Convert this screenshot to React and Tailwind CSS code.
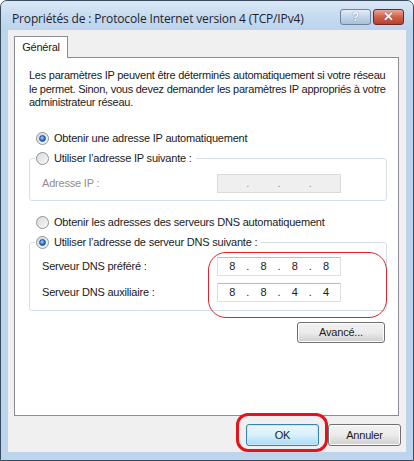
import React from 'react';

const body = { fontFamily: '"Liberation Sans", Arial, sans-serif' };
const title = { fontFamily: '"Open Sans", "Liberation Sans", sans-serif' };

function Radio({ checked }) {
  return (
    <span className="w-[13px] h-[13px] rounded-full border border-[#8f9496] bg-gradient-to-br from-[#d6d8da] to-[#fbfbfb] flex items-center justify-center shrink-0">
      {checked && (
        <span className="w-[7px] h-[7px] rounded-full bg-[radial-gradient(circle_at_40%_35%,#9fd2f7,#1f62b8_70%)] border border-[#1b4f93]" />
      )}
    </span>
  );
}

function IpField({ values, disabled }) {
  const parts = values || ['', '', '', ''];
  return (
    <div
      className={`w-[124px] h-[19px] border flex items-center text-[11px] ${
        disabled ? 'bg-[#efefef] border-[#dadada] text-[#8f8f8f]' : 'bg-white border-[#dcdfe6] border-t-[#b8bcc5] text-[#1a1a1a]'
      }`}
    >
      {parts.map((v, i) => (
        <React.Fragment key={i}>
          <span className="flex-1 text-center">{v}</span>
          {i < 3 && <span className="w-[3px] text-center leading-none">.</span>}
        </React.Fragment>
      ))}
    </div>
  );
}

function Button({ children, primary }) {
  return (
    <button
      className={`h-[22px] w-[73px] rounded-[3px] border text-[11px] text-[#1a1a1a] ${
        primary
          ? 'border-[#3c7fb1] bg-gradient-to-b from-[#eaf6fd] via-[#d9f0fc] to-[#a7d9f5] shadow-[inset_0_0_0_1px_#c8eaf8]'
          : 'border-[#707070] bg-gradient-to-b from-[#f2f2f2] via-[#ebebeb] to-[#cfcfcf] shadow-[inset_0_0_0_1px_#fcfcfc]'
      }`}
    >
      {children}
    </button>
  );
}

export default function App() {
  return (
    <div className="w-[414px] h-[461px] bg-white">
      <div className="w-[414px] h-[461px] border border-[#394a5c] rounded-t-[7px] bg-[#bcd4ec] flex flex-col overflow-hidden">
        {/* title bar */}
        <div className="h-[29px] shrink-0 flex items-center pl-[11px] pr-[9px] bg-gradient-to-b from-[#dae8f6] via-[#c7dcf1] to-[#bcd3ec]">
          <span className="text-[12px] tracking-[-0.15px] text-[#1e1e2e] mt-[6px] flex-1" style={title}>
            Propriétés de : Protocole Internet version 4 (TCP/IPv4)
          </span>
          <div className="flex gap-[2px] mt-[8px] self-start">
            <div className="w-[31px] h-[16px] rounded-[3px] border border-[#6d8299] bg-gradient-to-b from-[#e3edf7] via-[#c3d5e8] to-[#a9c2dc] flex items-center justify-center text-[12px] font-bold text-white [text-shadow:0_0_1px_#3b4b5c]" style={body}>
              ?
            </div>
            <div className="w-[31px] h-[16px] rounded-[3px] border border-[#6e2a22] bg-gradient-to-b from-[#e9a595] via-[#d0604b] to-[#b8402c] flex items-center justify-center text-[13px] font-bold text-white [text-shadow:0_0_1px_#4a1208]" style={body}>
              ✕
            </div>
          </div>
        </div>

        {/* client area */}
        <div className="mx-[7px] h-[422px] bg-[#f0f0f0] flex flex-col px-[6px] pt-[6px] text-[11px] tracking-[-0.2px]" style={body}>
          <div className="flex">
            <div className="h-[22px] w-[54px] bg-white border border-[#898c95] border-b-0 flex items-center justify-center text-[#1a1a1a] relative z-10">
              Général
            </div>
          </div>
          <div className="relative h-[359px] -mt-[1px] mr-[1px] bg-white border border-[#898c95] pl-[14px] pr-[11px] pt-[11px] text-[#1a1a1a]">
            <p className="leading-[13.5px] w-[362px] tracking-[-0.25px]">
              Les paramètres IP peuvent être déterminés automatiquement si votre réseau le permet. Sinon, vous devez demander les paramètres IP appropriés à votre administrateur réseau.
            </p>

            <div className="mt-[22px] ml-[7px] h-[14px] flex items-center gap-[5px]">
              <Radio checked />
              <span>Obtenir une adresse IP automatiquement</span>
            </div>

            <fieldset className="mt-[6px] border border-[#d5dfe5] rounded-[3px] pl-[12px] pr-[45px] pb-[7px]">
              <legend className="-ml-[7px] pl-[1px] pr-[4px] h-[14px] flex items-center gap-[5px]">
                <Radio />
                <span>Utiliser l’adresse IP suivante :</span>
              </legend>
              <div className="mt-[8px] flex items-center">
                <span className="flex-1 text-[#8f8f8f]">Adresse IP :</span>
                <IpField disabled />
              </div>
            </fieldset>

            <div className="mt-[15px] ml-[7px] h-[14px] flex items-center gap-[5px]">
              <Radio />
              <span>Obtenir les adresses des serveurs DNS automatiquement</span>
            </div>

            <div className="relative">
              <fieldset className="mt-[6px] border border-[#d5dfe5] rounded-[3px] pl-[12px] pr-[45px] pb-[8px]">
                <legend className="-ml-[7px] pl-[1px] pr-[4px] h-[14px] flex items-center gap-[5px]">
                  <Radio checked />
                  <span>Utiliser l’adresse de serveur DNS suivante :</span>
                </legend>
                <div className="mt-[7px] flex items-center">
                  <span className="flex-1">Serveur DNS préféré :</span>
                  <IpField values={['8', '8', '8', '8']} />
                </div>
                <div className="mt-[7px] flex items-center">
                  <span className="flex-1">Serveur DNS auxiliaire :</span>
                  <IpField values={['8', '8', '4', '4']} />
                </div>
              </fieldset>
              <div className="absolute left-[179px] top-[16px] w-[179px] h-[66px] border border-[#e0202a] rounded-[18px] pointer-events-none" />
            </div>

            <div className="mt-[11px] flex justify-end pr-[2px]">
              <button className="h-[21px] w-[88px] rounded-[3px] border border-[#707070] bg-gradient-to-b from-[#f2f2f2] via-[#ebebeb] to-[#cfcfcf] shadow-[inset_0_0_0_1px_#fcfcfc] text-[11px] text-[#1a1a1a]">
                Avancé...
              </button>
            </div>
          </div>

          <div className="mt-[8px] flex justify-end gap-[9px] -mr-[1px]">
            <div className="relative">
              <Button primary>OK</Button>
              <div className="absolute -left-[10px] -top-[11px] w-[92px] h-[39px] border-[3px] border-[#e3151c] rounded-[12px] pointer-events-none" />
            </div>
            <Button>Annuler</Button>
          </div>
        </div>
      </div>
    </div>
  );
}
